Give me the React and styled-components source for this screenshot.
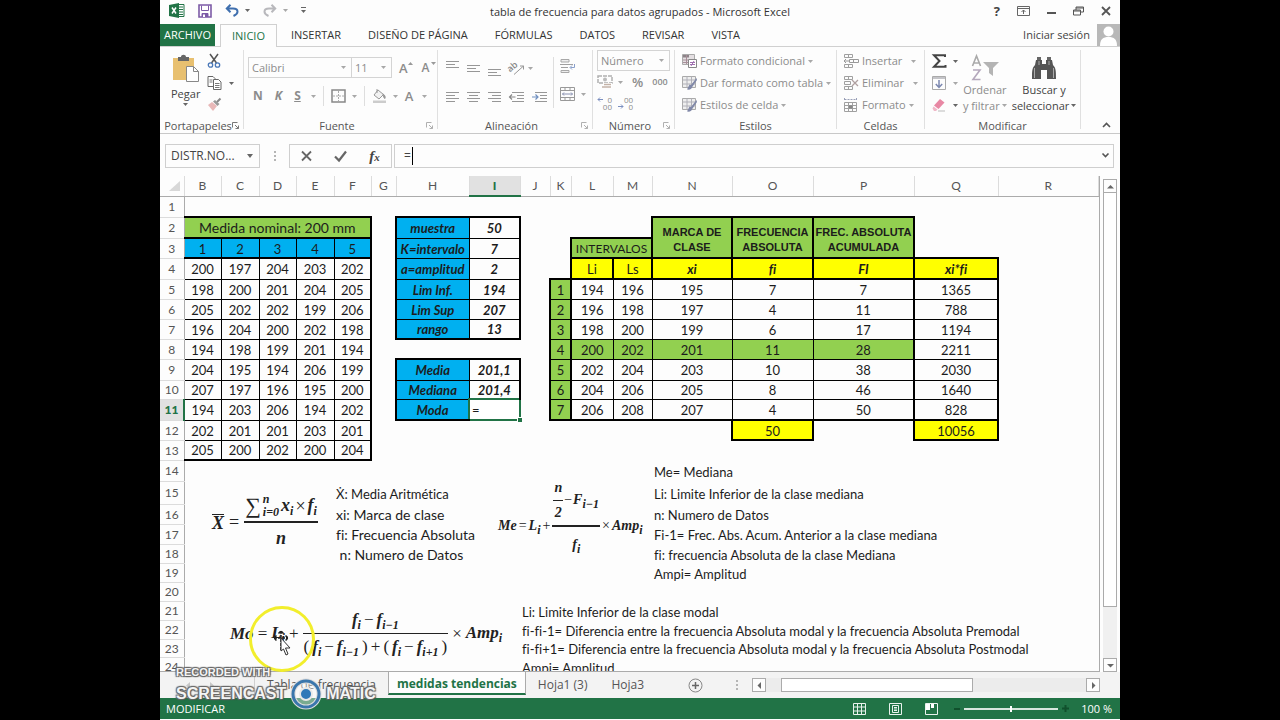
import React from 'react';
import styled, { createGlobalStyle, css } from 'styled-components';

const GREEN = '#217346';
const LIME = '#92d050';
const BLUE = '#00b0f0';
const YELLOW = '#ffff00';

const GlobalStyle = createGlobalStyle`
  *, *::before, *::after { box-sizing: border-box; }
  html, body { margin: 0; padding: 0; background: #000; }
  button, input, select { font: inherit; color: inherit; margin: 0; }
  svg { display: block; flex: none; overflow: visible; }
`;

const Screen = styled.div`
  min-height: 100vh;
  padding: 0 12.5%;
  background: #000;
`;

const Window = styled.div`
  position: relative;
  display: flex;
  flex-direction: column;
  height: 100vh;
  overflow: hidden;
  background: #fdfdfd;
  color: #444;
  font-family: "Open Sans", "Noto Sans", sans-serif;
  font-size: 11px;
  line-height: 16px;
`;

const Plain = styled.button`
  display: inline-flex;
  align-items: center;
  justify-content: center;
  gap: ${(p) => p.$gap ?? 4}px;
  padding: 0;
  border: 0;
  background: none;
  white-space: nowrap;
  color: ${(p) => (p.disabled ? '#8c8c8c' : '#444')};
`;

/* ---------- title bar ---------- */
const TitleBar = styled.header`
  display: flex;
  align-items: center;
  height: 24px;
  flex: none;
  padding: 0 9px 3px 9px;
`;
const QuickAccess = styled.div`
  display: flex;
  align-items: center;
  gap: 13px;
  flex: 1 1 0;
`;
const Title = styled.h1`
  margin: 0;
  padding-top: 2px;
  font-size: 11px;
  font-weight: 400;
  color: #333;
`;
const WindowButtons = styled.div`
  display: flex;
  align-items: center;
  justify-content: flex-end;
  gap: 17px;
  flex: 1 1 0;
`;

/* ---------- ribbon tabs ---------- */
const TabRow = styled.nav`
  display: flex;
  align-items: stretch;
  height: 23px;
  flex: none;
  border-bottom: 1px solid #d0d0d0;
`;
const FileTab = styled.button`
  width: 55px;
  padding: 0;
  border: 0;
  background: ${GREEN};
  color: #fff;
  font-size: 11px;
`;
const RibbonTab = styled.button`
  margin-right: 5px;
  padding: 0 11px;
  border: 0;
  background: none;
  font-size: 11px;
  color: #333;
  white-space: nowrap;
  ${(p) =>
    p.$active &&
    css`
      margin: 0 3px -1px 5px;
      border: 1px solid #d0d0d0;
      border-bottom: 0;
      background: #fdfdfd;
      color: ${GREEN};
    `}
`;
const Account = styled.div`
  display: flex;
  align-items: center;
  gap: 7px;
  margin-left: auto;
  font-size: 11px;
`;

/* ---------- ribbon ---------- */
const Ribbon = styled.div`
  display: flex;
  height: 87px;
  flex: none;
  padding-top: 3px;
  border-bottom: 1px solid #c8c8c8;
`;
const GroupBox = styled.section`
  display: flex;
  flex-direction: column;
  width: ${(p) => p.$w}px;
  flex: none;
  background: linear-gradient(#e0e0e0, #e0e0e0) right top / 1px calc(100% - 4px) no-repeat;
`;
const GroupBody = styled.div`
  display: flex;
  flex: 1;
  min-height: 0;
  padding: ${(p) => p.$pad || '0'};
  gap: ${(p) => p.$gap ?? 0}px;
`;
const GroupFoot = styled.div`
  display: flex;
  align-items: center;
  height: 15px;
  padding: 0 5px 0 4px;
  font-size: 11px;
  line-height: 14px;
  color: #555;
`;
const GroupLabel = styled.span`
  flex: 1;
  text-align: center;
  white-space: nowrap;
`;
const Column = styled.div`
  display: flex;
  flex-direction: column;
  align-items: ${(p) => p.$align || 'flex-start'};
  gap: ${(p) => p.$gap ?? 0}px;
  padding: ${(p) => p.$pad || '0'};
`;
const Row = styled.div`
  display: flex;
  align-items: center;
  height: ${(p) => p.$h}px;
  gap: ${(p) => p.$gap ?? 4}px;
  padding-left: ${(p) => p.$pl ?? 0}px;
`;
const BigButton = styled(Plain)`
  flex-direction: column;
  gap: ${(p) => p.$gap ?? 1}px;
  line-height: 15px;
`;
const InlineCaret = styled.span`
  display: inline-flex;
  align-items: center;
  gap: 2px;
`;
const Divider = styled.span`
  width: 1px;
  height: ${(p) => p.$h}px;
  background: #dedede;
`;
const SelectWrap = styled.label`
  display: flex;
  align-items: center;
  width: ${(p) => p.$w}px;
  height: 21px;
  padding-right: 5px;
  border: 1px solid #d4d4d4;
  background: #fdfdfd;
  & + & { margin-left: -1px; }
`;
const Select = styled.select`
  flex: 1;
  min-width: 0;
  height: 100%;
  padding: 0 0 0 3px;
  border: 0;
  background: none;
  appearance: none;
  color: #8c8c8c;
  opacity: 1;
`;
const Letter = styled.span`
  font-size: ${(p) => p.$size || 12}px;
  font-weight: ${(p) => (p.$bold ? 700 : 600)};
  font-style: ${(p) => (p.$italic ? 'italic' : 'normal')};
  text-decoration: ${(p) => (p.$under ? 'underline' : 'none')};
`;
const Collapse = styled(Plain)`
  align-self: flex-end;
  margin-left: auto;
  padding: 0 9px 5px;
`;

/* ---------- formula bar ---------- */
const FormulaBar = styled.div`
  display: flex;
  align-items: center;
  height: 42px;
  flex: none;
  padding: 1px 6px 0 5px;
`;
const FieldBox = styled.div`
  position: relative;
  display: flex;
  align-items: center;
  height: 24px;
  border: 1px solid #cfcfcf;
  background: #fdfdfd;
  padding-right: ${(p) => p.$pr ?? 0}px;
  width: ${(p) => (p.$w ? `${p.$w}px` : 'auto')};
  flex: ${(p) => (p.$grow ? 1 : 'none')};
  margin-left: ${(p) => (p.$grow ? 2 : 0)}px;
`;
const FieldInput = styled.input`
  flex: 1;
  min-width: 0;
  height: 100%;
  padding: 0 0 0 ${(p) => p.$pl ?? 5}px;
  border: 0;
  outline: 0;
  background: none;
  font-size: 12px;
  color: #444;
`;
const TextCaret = styled.span`
  position: absolute;
  left: 17px;
  top: 2px;
  width: 1px;
  height: 18px;
  background: #000;
`;
const Grip = styled.span`
  display: flex;
  flex-direction: column;
  align-items: center;
  gap: 2px;
  width: ${(p) => p.$w}px;
  &::before, &::after, & > i { content: ''; width: 2px; height: 2px; background: #b5b5b5; }
`;
const Fx = styled(Plain)`
  width: 33px;
  font-family: "Liberation Serif", serif;
  font-size: 15px;
  font-style: italic;
  font-weight: 700;
  gap: 0;
  small { font-size: 11px; padding-top: 3px; }
`;

/* ---------- sheet ---------- */
const Workspace = styled.main`
  display: flex;
  flex: 1;
  min-height: 0;
`;
const SheetPane = styled.div`
  position: relative;
  flex: 1;
  min-width: 0;
  overflow: hidden;
  border-right: 1px solid #ababab;
  border-bottom: 1px solid #ababab;
`;
const Grid = styled.table`
  width: 100%;
  table-layout: fixed;
  border-collapse: collapse;
  font-family: Lato, "Noto Sans", sans-serif;
  font-size: 13px;
  font-variant-ligatures: none;
  line-height: 16px;
  color: #1c1c1c;
`;
const SheetRow = styled.tr`
  height: ${(p) => p.$h}px;
`;
const ColHead = styled.th`
  padding: 0;
  border-right: 1px solid #dcdcdc;
  border-bottom: 1px solid #ababab;
  background: #fdfdfd;
  font-size: 12px;
  font-weight: 400;
  color: #555;
  ${(p) =>
    p.$active &&
    css`
      background: #e1e1e1;
      border-bottom: 2px solid ${GREEN};
      font-weight: 900;
      color: ${GREEN};
    `}
`;
const RowHead = styled.th`
  padding: 1px 0 0;
  border-right: 1px solid #ababab;
  border-bottom: 1px solid #dcdcdc;
  background: #fdfdfd;
  font-size: 12px;
  font-weight: 400;
  color: #555;
  ${(p) =>
    p.$active &&
    css`
      background: #e1e1e1;
      border-right: 2px solid ${GREEN};
      font-weight: 900;
      color: ${GREEN};
    `}
`;
const side = (b, ch) => {
  if (b.includes(ch.toUpperCase())) return '2px solid #000';
  if (b.includes(ch)) return '1px solid #000';
  return '0';
};
const Cell = styled.td`
  padding: ${(p) => p.$pad || '1px 0 0'};
  text-align: ${(p) => (p.$left ? 'left' : 'center')};
  white-space: ${(p) => (p.$wrap ? 'normal' : 'nowrap')};
  background: ${(p) => p.$bg || 'transparent'};
  font-weight: ${(p) => (p.$bold ? 700 : 400)};
  font-style: ${(p) => (p.$italic ? 'italic' : 'normal')};
  font-size: ${(p) => p.$size || 13}px;
  font-family: ${(p) => (p.$sans ? '"Liberation Sans", sans-serif' : 'inherit')};
  line-height: ${(p) => (p.$wrap ? 15 : 16)}px;
  border-top: ${(p) => side(p.$b || '', 't')};
  border-right: ${(p) => side(p.$b || '', 'r')};
  border-bottom: ${(p) => side(p.$b || '', 'b')};
  border-left: ${(p) => side(p.$b || '', 'l')};
`;
const ActiveCell = styled.td`
  position: relative;
  padding: 1px 0 0 2px;
  border: 2px solid ${GREEN};
  text-align: left;
  background: #fff;
  &::after {
    content: '';
    position: absolute;
    right: -3px;
    bottom: -3px;
    width: 5px;
    height: 5px;
    border: 1px solid #fff;
    border-right: 0;
    border-bottom: 0;
    background: ${GREEN};
  }
`;

/* ---------- floating equations ---------- */
const Equation = styled.div`
  position: absolute;
  left: ${(p) => p.$x}px;
  top: ${(p) => p.$y}px;
  display: flex;
  align-items: center;
  gap: ${(p) => p.$gap}px;
  font-family: "Liberation Serif", serif;
  font-size: ${(p) => p.$size}px;
  font-weight: 700;
  font-style: italic;
  line-height: 16px;
  color: #222;
  white-space: nowrap;
`;
const Fraction = styled.span`
  display: inline-flex;
  flex-direction: column;
  align-items: center;
  padding: 0 1px;
`;
const Part = styled.span`
  display: flex;
  align-items: ${(p) => (p.$top ? 'flex-start' : 'center')};
  justify-content: center;
  gap: ${(p) => p.$gap ?? 2}px;
  height: ${(p) => p.$h}px;
  padding-top: ${(p) => p.$top ?? 0}px;
`;
const Bar = styled.span`
  align-self: stretch;
  height: ${(p) => p.$t || 2}px;
  margin: 0 -1px;
  background: #222;
`;
const Sub = styled.sub`
  font-size: 12px;
  line-height: 8px;
  vertical-align: -4px;
`;
const Op = styled.span`
  font-weight: 400;
  font-style: normal;
`;
const Sigma = styled.span`
  font-size: 22px;
  font-weight: 400;
  font-style: normal;
`;
const Limits = styled.span`
  display: flex;
  flex-direction: column;
  font-size: 12px;
  line-height: 13px;
`;
const Mean = styled.span`
  border-top: 1px solid #222;
  line-height: 16px;
`;

/* ---------- scroll bars, sheet tabs, status ---------- */
const VScroll = styled.div`
  display: flex;
  flex-direction: column;
  align-items: center;
  width: 20px;
  padding: 3px 2px 0 2px;
`;
const ScrollButton = styled.button`
  display: flex;
  align-items: center;
  justify-content: center;
  width: 14px;
  height: 14px;
  flex: none;
  padding: 0;
  border: 1px solid #ababab;
  background: #fdfdfd;
`;
const VTrack = styled.div`
  flex: 1;
  width: 14px;
  background: #f0f0f0;
`;
const VThumb = styled.div`
  height: 89%;
  border: 1px solid #ababab;
  border-top: 0;
  background: #fff;
`;
const SheetTabs = styled.div`
  display: flex;
  height: 26px;
  flex: none;
  padding-right: 20px;
  background: #f3f3f3;
  font-size: 12px;
`;
const NavArrows = styled.div`
  display: flex;
  align-items: center;
  gap: 20px;
  width: 95px;
  padding: 0 0 0 26px;
  border-right: 1px solid #d0d0d0;
`;
const SheetTab = styled.button`
  height: 25px;
  padding: 0 12px;
  border: 0;
  background: none;
  font-size: 12px;
  color: #555;
  white-space: nowrap;
  ${(p) =>
    p.$active &&
    css`
      height: 23px;
      padding: 2px 8px 0;
      border-right: 1px solid #ababab;
      border-left: 1px solid #ababab;
      border-bottom: 2px solid ${GREEN};
      background: #fdfdfd;
      font-weight: 700;
      color: ${GREEN};
    `}
`;
const AddSheet = styled(Plain)`
  margin-left: 32px;
`;
const HScroll = styled.div`
  display: flex;
  align-items: center;
  flex: 0 0 364px;
  margin-left: auto;
`;
const HTrack = styled.div`
  flex: 1;
  height: 14px;
  padding-left: 15px;
  background: #ececec;
`;
const HThumb = styled.div`
  width: 63%;
  height: 14px;
  border: 1px solid #ababab;
  background: #fff;
`;
const StatusBar = styled.footer`
  display: flex;
  align-items: center;
  height: 21px;
  flex: none;
  margin-bottom: 1px;
  padding: 0 8px 0 6px;
  background: ${GREEN};
  color: #fff;
  font-size: 11px;
`;
const ViewIcons = styled.div`
  display: flex;
  align-items: center;
  gap: 23px;
  margin: 0 16px 0 auto;
`;
const Zoom = styled.label`
  display: flex;
  align-items: center;
  gap: 4px;
`;
const ZoomValue = styled.span`
  padding-left: 8px;
`;
const ZoomRange = styled.input`
  width: 94px;
  height: 12px;
  appearance: none;
  background: linear-gradient(#d7e6dd, #d7e6dd) center / 100% 2px no-repeat;
  &::-webkit-slider-thumb {
    appearance: none;
    width: 2px;
    height: 6px;
    background: #fff;
  }
`;

/* ---------- recorder overlays ---------- */
const Halo = styled.div`
  position: absolute;
  left: 89px;
  top: 606px;
  width: 66px;
  height: 66px;
  border: 3px solid #f2ee2c;
  border-radius: 50%;
`;
const Pointer = styled.div`
  position: absolute;
  left: 113px;
  top: 630px;
`;
const Watermark = styled.div`
  position: absolute;
  left: 16px;
  top: 664px;
  font-family: "Liberation Sans", sans-serif;
  font-weight: 700;
  color: #f4f4f4;
  text-shadow: -1px -1px 1px #666, 1px -1px 1px #666, -1px 1px 1px #666, 1px 1px 1px #555;
`;
const WatermarkTop = styled.div`
  font-size: 11px;
  line-height: 16px;
`;
const WatermarkMain = styled.div`
  display: flex;
  align-items: center;
  gap: 4px;
  height: 27px;
  font-size: 16px;
`;

/* ---------- icons ---------- */
const Svg = ({ w, h, children, ...rest }) => (
  <svg width={w} height={h} viewBox={`0 0 ${w} ${h}`} fill="none" aria-hidden="true" {...rest}>
    {children}
  </svg>
);
const Caret = ({ c = '#a8a8a8' }) => (
  <Svg w={5} h={3}>
    <path d="M0 0h5L2.500 3z" fill={c} />
  </Svg>
);
const Launcher = ({ c = '#b0b0b0' }) => (
  <Svg w={7} h={7}>
    <path d="M.5 5.500V.5h5M3 3l3.500 3.500M6.500 3.500v3h-3" stroke={c} />
  </Svg>
);
const ExcelLogo = () => (
  <Svg w={16} h={15}>
    <path d="M9 1.500h6v12H9" fill="#fff" stroke={GREEN} />
    <path d="M10 4h4M10 6.500h4M10 9h4M10 11.500h4" stroke={GREEN} strokeWidth="1.200" />
    <path d="M0 2l10-2v15L0 13z" fill={GREEN} />
    <path d="M3 4.500l4 6M7 4.500l-4 6" stroke="#fff" strokeWidth="1.500" />
  </Svg>
);
const SaveIcon = () => (
  <Svg w={14} h={14}>
    <path d="M1 1h12v12H1z" stroke="#7c5aa6" strokeWidth="1.600" fill="#fff" />
    <path d="M3.500 1.500v5h7v-5" stroke="#7c5aa6" />
    <path d="M4 13V9.500h6V13" stroke="#7c5aa6" fill="#7c5aa6" />
    <path d="M5 10.500h2V13H5z" fill="#fff" />
  </Svg>
);
const UndoIcon = ({ c }) => (
  <Svg w={14} h={13}>
    <path d="M1.500 4.500H8c3 0 4.500 1.500 4.500 3.200 0 1.800-1.300 3-4 4.300M5.500 .8L1.800 4.500 5.500 8.200" stroke={c} strokeWidth="2" />
  </Svg>
);
const RedoIcon = ({ c }) => (
  <Svg w={14} h={13}>
    <path d="M12.500 4.500H6C3 4.500 1.500 6 1.500 7.700c0 1.800 1.300 3 4 4.300M8.500 .8l3.700 3.700-3.700 3.700" stroke={c} strokeWidth="2" />
  </Svg>
);
const PasteIcon = () => (
  <Svg w={28} h={30}>
    <path d="M1 4h21v22H1z" fill="#e8c070" />
    <path d="M6 3h3c0-3 5-3 5 0h3v4H6z" fill="#666" />
    <path d="M14.500 12.500h7l5 5v10h-12z" fill="#fff" stroke="#888" />
    <path d="M21.500 12.500v5h5" stroke="#888" />
  </Svg>
);
const CutIcon = () => (
  <Svg w={14} h={14}>
    <path d="M3 0l6.500 9M11 0L4.500 9" stroke="#555" strokeWidth="1.500" />
    <circle cx="3.500" cy="11" r="2.200" stroke="#4a78b8" strokeWidth="1.300" />
    <circle cx="10.500" cy="11" r="2.200" stroke="#4a78b8" strokeWidth="1.300" />
  </Svg>
);
const CopyIcon = () => (
  <Svg w={15} h={14}>
    <path d="M1 .5h5l2 2v8H1z" fill="#fff" stroke="#666" />
    <path d="M6.500 3.500h5l2.500 2.500v7.500H6.500z" fill="#fff" stroke="#666" />
    <path d="M8 7.500h4.500M8 9.500h4.500M8 11.500h4.500M2.500 4h3M2.500 6h3" stroke="#777" />
  </Svg>
);
const BrushIcon = () => (
  <Svg w={15} h={13}>
    <path d="M1 7l4-3 5 4-4 5z" fill="#e8b8b8" />
    <path d="M6 3.500l4.500 4.500 2-2L8 2z" fill="#999" />
    <path d="M10 4l3.500-3.500" stroke="#888" strokeWidth="2" />
  </Svg>
);
const BordersIcon = () => (
  <Svg w={15} h={14}>
    <path d="M1 1h13v12H1z" stroke="#888" strokeWidth="1.500" />
    <path d="M7.500 2v10M2 7h11" stroke="#aaa" strokeDasharray="2 1" />
  </Svg>
);
const FillIcon = () => (
  <Svg w={15} h={14}>
    <path d="M6 1l5.500 4.500L7 10 2 6z" stroke="#999" fill="#f2f2f2" />
    <path d="M5 4V0M11 5c2 1 2.500 3 2 4.500-1 0-1.500-2-2-4.500z" stroke="#999" fill="#999" />
    <path d="M1 11.500h13V14H1z" fill="#ccc" />
  </Svg>
);
const Lines = ({ lens, align = 'left', shift = 0 }) => (
  <Svg w={13} h={11}>
    {lens.map((l, i) => {
      const x = { left: 0, right: 13 - l, center: (13 - l) / 2 }[align];
      return <path key={i} d={`M${x} ${i * 3 + 0.5 + shift}h${l}`} stroke="#979797" />;
    })}
  </Svg>
);
const IndentIcon = ({ flip }) => (
  <Svg w={15} h={11}>
    <path d="M3 .5h12M8 3.500h7M8 6.500h7M3 9.500h12" stroke="#979797" />
    <path d={flip ? 'M0 5h6M3.500 2.500L6 5 3.500 7.500' : 'M6.500 5h-6M3 2.500L.5 5 3 7.500'} stroke={flip ? '#6f8fc0' : '#888'} strokeWidth="1.200" />
  </Svg>
);
const OrientIcon = () => (
  <Svg w={15} h={14}>
    <text x="0" y="9" fontSize="9" fill="#888" transform="rotate(-40 4 9)" fontWeight="600">ab</text>
    <path d="M5 13.500L14.500 5M14.500 8.500V5H11" stroke="#979797" />
  </Svg>
);
const WrapIcon = () => (
  <Svg w={16} h={14}>
    <path d="M1 .5h8v2.500H1zM1 11.500h8v2H1z" stroke="#a8a8a8" fill="#eee" />
    <path d="M0 5.500h13M1 8.500h7" stroke="#a0a0a0" />
    <path d="M14.500 5v3.500h-4M12 6.500l-2 2 2 2" stroke="#8aa0cc" />
  </Svg>
);
const MergeIcon = () => (
  <Svg w={15} h={14}>
    <path d="M.5.5h14v13H.5zM.5 3.500h14M.5 10.500h14M5 .5v3M10 .5v3M5 10.500v3M10 10.500v3" stroke="#999" />
    <path d="M2.500 7h10M4 5.500L2.500 7 4 8.500M11 5.500L12.500 7 11 8.500" stroke="#8890b0" />
  </Svg>
);
const MoneyIcon = () => (
  <Svg w={16} h={14}>
    <path d="M1 1h14v7H1z" stroke="#b0b0b0" strokeDasharray="4 1" strokeWidth="1.500" />
    <circle cx="8" cy="4.500" r="2" fill="#bbb" />
    <path d="M7 8h8v5H5z" fill="#fff" />
    <path d="M7 9.500h7M5 12h9" stroke="#c4b3a8" strokeWidth="1.500" />
  </Svg>
);
const Digits = styled.span`
  display: grid;
  grid-template-columns: 6px auto;
  justify-items: end;
  align-items: center;
  width: 15px;
  font-size: 8px;
  line-height: 7px;
  & > :last-child { grid-column: ${(p) => (p.$less ? 2 : '1 / 3')}; }
`;
const CondIcon = () => (
  <Svg w={15} h={14}>
    <path d="M.5.5h12v10H.5z" fill="#e4dfe2" stroke="#aaa" />
    <path d="M1 1h6v2.500H1z" fill="#8d8388" />
    <path d="M1 6h5M1 8.500h5M4.500 1v9" stroke="#a78f98" />
    <path d="M6.500 5.500h8v8h-8z" fill="#fff" stroke="#888" />
    <path d="M8 8.500h5M8 10.500h5M12 7l-3 5" stroke="#a070b0" />
  </Svg>
);
const TableStyleIcon = () => (
  <Svg w={15} h={14}>
    <path d="M.5.5h13v11H.5z" fill="#eee" stroke="#aaa" />
    <path d="M.5 4h13M.5 8h13M5 .5v11M9.500.5v11" stroke="#b0b0b8" />
    <path d="M14.500 2L9 9l-1.500-.5L5 13.500c3 .5 5-.5 5.500-3L15 4z" fill="#8088a8" />
  </Svg>
);
const CellsIcon = ({ kind }) => (
  <Svg w={16} h={14}>
    {kind === 'format' ? (
      <>
        <path d="M1.500 1.500h12M1.500 0v3M13.500 0v3" stroke="#9aa0b8" strokeDasharray="2 1" />
        <path d="M1.500 4.500h12v9h-12zM1.500 7.500h12M1.500 10.500h12M5.500 4.500v9M9.500 4.500v9" stroke="#a0a0a0" />
        <path d="M6 7.500h3.500v3H6z" fill="#888" />
      </>
    ) : (
      <>
        <path d="M1.500.5h8v3h-8zM5.500.5v3M1.500 10.500h8v3h-8zM5.500 10.500v3" stroke="#a0a0a0" />
        {kind === 'insert' ? (
          <path d="M6.500 5.500h9v3h-9zM10.500 5.500v3M6 7H1M3 5L1 7l2 2" stroke="#999" />
        ) : (
          <>
            <path d="M1.500 5.500h6v3h-6z" stroke="#a0a0a0" />
            <path d="M9 4l6 6M15 4l-6 6" stroke="#b0a0a0" strokeWidth="1.300" />
          </>
        )}
      </>
    )}
  </Svg>
);
const SumIcon = () => (
  <Svg w={15} h={14}>
    <path d="M13 3V1.200H2L7.500 7 2 12.800h11.500V11" stroke="#444" strokeWidth="2" />
  </Svg>
);
const FillDownIcon = () => (
  <Svg w={14} h={14}>
    <path d="M.5.5h13v13H.5z" stroke="#aaa" />
    <path d="M1 1h12v2H1z" fill="#c4c4c8" />
    <path d="M7 4v7.500M3.800 8L7 11.500 10.200 8" stroke="#7c88b0" strokeWidth="1.500" />
  </Svg>
);
const EraserIcon = () => (
  <Svg w={14} h={13}>
    <path d="M8 0l4.500 3.500-6 6.500L2 6.500z" fill="#e888a4" />
    <path d="M1.500 7.500l4 3-1.500 1.500H2L.5 9.500z" fill="#f0b8c8" />
    <path d="M6 12h7" stroke="#bbb" />
  </Svg>
);
const SortIcon = () => (
  <Svg w={28} h={26}>
    <path d="M1.500 11L5.500 1l4 10M3 8h5" stroke="#aaa" strokeWidth="1.600" />
    <path d="M2 15h7L2 24.500h7.500" stroke="#b4a8bc" strokeWidth="1.600" />
    <path d="M12 7h16l-6 6v8l-4-3v-5z" fill="#b4b4b4" />
  </Svg>
);
const BinocularsIcon = () => (
  <Svg w={26} h={24}>
    <path d="M5 4h6v4h4V4h6l1 5c3 3 3 6 3 14h-9v-9h-6v9H1C1 15 1 12 4 9z" fill="#555" />
    <path d="M6 1h4v3H6zM16 1h4v3h-4z" fill="#666" />
    <path d="M3.500 12v10M22.500 12v10M8 5v4M18 5v4" stroke="#aaa" />
  </Svg>
);
const AvatarIcon = () => (
  <Svg w={23} h={22}>
    <path d="M0 0h23v22H0z" fill="#b8b8b8" />
    <circle cx="11.500" cy="7.500" r="5" fill="#fff" />
    <path d="M3 22c0-7 3-9 8.500-9s8.500 2 8.500 9z" fill="#fff" />
  </Svg>
);
const ArrowTip = ({ dir }) => (
  <Svg w={7} h={7}>
    <path d={{ up: 'M0 5.500h7L3.500 2z', down: 'M0 2h7L3.500 5.500z', left: 'M5 0v7L1.500 3.500z', right: 'M2 0v7l3.500-3.500z' }[dir]} fill="#666" />
  </Svg>
);

function Group({ w, label, launcher, launcherColor, children, pad, gap }) {
  return (
    <GroupBox $w={w} aria-label={label}>
      <GroupBody $pad={pad} $gap={gap}>{children}</GroupBody>
      <GroupFoot>
        <GroupLabel>{label}</GroupLabel>
        {launcher && (
          <Plain aria-label={`Abrir ${label}`}>
            <Launcher c={launcherColor} />
          </Plain>
        )}
      </GroupFoot>
    </GroupBox>
  );
}

/* ---------- sheet data ---------- */
const COLUMNS = [
  ['B', 37], ['C', 38], ['D', 37], ['E', 38], ['F', 37], ['G', 25], ['H', 73], ['I', 51], ['J', 30],
  ['K', 21], ['L', 42], ['M', 39], ['N', 80], ['O', 81], ['P', 101], ['Q', 84], ['R', 0],
];
const LETTERS = COLUMNS.map(([l]) => l);
const HEIGHTS = [21, 21, 20, 21, 20, 20, 20, 20, 21, 19, 21, 20, 20, 21, 23, 20, 20, 19, 19, 19, 19, 19, 18, 19];

const SAMPLES = [
  [200, 197, 204, 203, 202], [198, 200, 201, 204, 205], [205, 202, 202, 199, 206], [196, 204, 200, 202, 198],
  [194, 198, 199, 201, 194], [204, 195, 194, 206, 199], [207, 197, 196, 195, 200], [194, 203, 206, 194, 202],
  [202, 201, 201, 203, 201], [205, 200, 202, 200, 204],
];
const CLASSES = [
  [1, 194, 196, 195, 7, 7, 1365], [2, 196, 198, 197, 4, 11, 788], [3, 198, 200, 199, 6, 17, 1194],
  [4, 200, 202, 201, 11, 28, 2211], [5, 202, 204, 203, 10, 38, 2030], [6, 204, 206, 205, 8, 46, 1640],
  [7, 206, 208, 207, 4, 50, 828],
];

const cells = {};
const put = (ref, v, opts = {}) => {
  cells[ref] = { v, ...opts };
};

put('B2', 'Medida nominal: 200 mm', { span: 5, bg: LIME, size: 14, b: 'TRB' });
['B', 'C', 'D', 'E', 'F'].forEach((c, i) => {
  put(`${c}3`, i + 1, { bg: BLUE, b: `TB${i === 4 ? 'R' : 'r'}` });
  SAMPLES.forEach((r, j) => {
    put(`${c}${j + 4}`, r[i], { b: `${j === 9 ? 'B' : 'b'}${i === 4 ? 'R' : 'r'}` });
  });
});
[['muestra', '50'], ['K=intervalo', '7'], ['a=amplitud', '2'], ['Lim Inf.', '194'], ['Lim Sup', '207'], ['rango', '13']].forEach(([k, v], i) => {
  const edge = `${i === 0 ? 'T' : 't'}${i === 5 ? 'B' : 'b'}`;
  put(`H${i + 2}`, k, { bg: BLUE, bold: true, italic: true, b: `${edge}Lr` });
  put(`I${i + 2}`, v, { bold: true, italic: true, b: `${edge}lR` });
});
[['Media', '201,1'], ['Mediana', '201,4'], ['Moda', '=']].forEach(([k, v], i) => {
  const edge = `${i === 0 ? 'T' : 't'}${i === 2 ? 'B' : 'b'}`;
  put(`H${i + 9}`, k, { bg: BLUE, bold: true, italic: true, b: `${edge}Lr` });
  put(`I${i + 9}`, v, { bold: true, italic: true, b: `${edge}lR`, active: i === 2 });
});
put('L3', 'INTERVALOS', { span: 2, bg: LIME, size: 12, b: 'TRBL' });
[['N', 'MARCA DE CLASE'], ['O', 'FRECUENCIA ABSOLUTA'], ['P', 'FREC. ABSOLUTA ACUMULADA']].forEach(([c, v]) => {
  put(`${c}2`, v, { rows: 2, bg: LIME, sans: true, bold: true, size: 11, wrap: true, pad: '5px 0 0', b: 'TRBL' });
});
put('L4', 'Li', { bg: YELLOW, b: 'TRBL' });
put('M4', 'Ls', { bg: YELLOW, b: 'TRBL' });
[['N', 'xi'], ['O', 'fi'], ['P', 'FI'], ['Q', 'xi*fi']].forEach(([c, v]) => {
  put(`${c}4`, v, { bg: YELLOW, bold: true, italic: true, b: 'TBRL' });
});
CLASSES.forEach((r, i) => {
  const n = i + 5;
  const hot = i === 3 ? LIME : undefined;
  const bottom = i === 6 ? 'B' : 'b';
  put(`K${n}`, r[0], { bg: LIME, b: `${i === 0 ? 'T' : 't'}${bottom}LR` });
  put(`L${n}`, r[1], { bg: hot, b: `${bottom}Lr` });
  put(`M${n}`, r[2], { bg: hot, b: `${bottom}r` });
  put(`N${n}`, r[3], { bg: hot, b: `${bottom}r` });
  put(`O${n}`, r[4], { bg: hot, b: `${bottom}r` });
  put(`P${n}`, r[5], { bg: hot, b: `${bottom}R` });
  put(`Q${n}`, r[6], { b: `${bottom}LR` });
});
put('O12', 50, { bg: YELLOW, b: 'TRBL' });
put('Q12', 10056, { bg: YELLOW, b: 'TRBL' });
[
  ['F15', 'Ẋ: Media Aritmética'],
  ['F16', 'xi: Marca de clase', 14], ['F17', 'fi: Frecuencia Absoluta', 14], ['F18', '\u00a0n: Numero de Datos', 14],
  ['N14', 'Me= Mediana'], ['N15', 'Li: Limite Inferior de la clase mediana'], ['N16', 'n: Numero de Datos'],
  ['N17', 'Fi-1= Frec. Abs. Acum. Anterior a la clase mediana'], ['N18', 'fi: frecuencia Absoluta de la clase Mediana'], ['N19', 'Ampi= Amplitud'],
  ['J21', 'Li: Limite Inferior de la clase modal'],
  ['J22', 'fi-fi-1= Diferencia entre la frecuencia Absoluta modal y la frecuencia Absoluta Premodal'],
  ['J23', 'fi-fi+1= Diferencia entre la frecuencia Absoluta modal y la frecuencia Absoluta Postmodal'],
  ['J24', 'Ampi= Amplitud'],
].forEach(([ref, v, size]) => put(ref, v, { left: true, size, pad: '2px 0 0 2px' }));

const covered = new Set(['C2', 'D2', 'E2', 'F2', 'M3', 'N3', 'O3', 'P3']);

function Sheet() {
  return (
    <Grid>
      <colgroup>
        <col width="24" />
        {COLUMNS.map(([l, w]) => (w ? <col key={l} width={w} /> : <col key={l} />))}
      </colgroup>
      <thead>
        <SheetRow $h={20}>
          <ColHead aria-label="Seleccionar todo">
            <Svg w={24} h={14}>
              <path d="M20 2v10H9z" fill="#d8d8d8" />
            </Svg>
          </ColHead>
          {LETTERS.map((l) => (
            <ColHead key={l} scope="col" $active={l === 'I'}>{l}</ColHead>
          ))}
        </SheetRow>
      </thead>
      <tbody>
        {HEIGHTS.map((h, i) => {
          const n = i + 1;
          return (
            <SheetRow key={n} $h={h}>
              <RowHead scope="row" $active={n === 11}>{n}</RowHead>
              {LETTERS.map((l) => {
                const ref = l + n;
                if (covered.has(ref)) return null;
                const c = cells[ref];
                if (!c) return <Cell key={ref} />;
                if (c.active) return <ActiveCell key={ref}>{c.v}</ActiveCell>;
                return (
                  <Cell
                    key={ref}
                    colSpan={c.span}
                    rowSpan={c.rows}
                    $bg={c.bg}
                    $b={c.b}
                    $bold={c.bold}
                    $italic={c.italic}
                    $size={c.size}
                    $sans={c.sans}
                    $wrap={c.wrap}
                    $left={c.left}
                    $pad={c.pad}
                  >
                    {c.v}
                  </Cell>
                );
              })}
            </SheetRow>
          );
        })}
      </tbody>
    </Grid>
  );
}

function Equations() {
  return (
    <>
      <Equation $x={52} $y={315} $size={18} $gap={5}>
        <Mean>X</Mean>
        <Op>=</Op>
        <Fraction>
          <Part $h={30} $gap={2}>
            <Sigma>∑</Sigma>
            <Limits><span>n</span><span>i=0</span></Limits>
            <span>x<Sub>i</Sub></span>
            <Op>×</Op>
            <span>f<Sub>i</Sub></span>
          </Part>
          <Bar />
          <Part $h={30}>n</Part>
        </Fraction>
      </Equation>
      <Equation $x={338} $y={299} $size={14} $gap={2}>
        <span>Me</span>
        <Op>=</Op>
        <span>L<Sub>i</Sub></span>
        <Op>+</Op>
        <Fraction>
          <Part $h={50} $gap={1}>
            <Fraction>
              <Part $h={24}>n</Part>
              <Bar $t={1} />
              <Part $h={24}>2</Part>
            </Fraction>
            <Op>−</Op>
            <span>F<Sub>i−1</Sub></span>
          </Part>
          <Bar />
          <Part $h={50} $top={10}><span>f<Sub>i</Sub></span></Part>
        </Fraction>
        <Op>×</Op>
        <span>Amp<Sub>i</Sub></span>
      </Equation>
      <Equation $x={70} $y={431} $size={17} $gap={4}>
        <span>Mo</span>
        <Op>=</Op>
        <span>L<Sub>i</Sub></span>
        <Op>+</Op>
        <Fraction>
          <Part $h={26} $gap={3}>
            <span>f<Sub>i</Sub></span><Op>−</Op><span>f<Sub>i−1</Sub></span>
          </Part>
          <Bar $t={1} />
          <Part $h={26} $gap={3}>
            <Op>(</Op><span>f<Sub>i</Sub></span><Op>−</Op><span>f<Sub>i−1</Sub></span><Op>)</Op>
            <Op>+</Op>
            <Op>(</Op><span>f<Sub>i</Sub></span><Op>−</Op><span>f<Sub>i+1</Sub></span><Op>)</Op>
          </Part>
        </Fraction>
        <Op>×</Op>
        <span>Amp<Sub>i</Sub></span>
      </Equation>
    </>
  );
}

function RibbonPanel() {
  return (
    <Ribbon>
      <Group w={84} label="Portapapeles" launcher launcherColor="#777" pad="4px 0 0 11px" gap={7}>
        <BigColumn>
          <BigButton $gap={2}>
            <PasteIcon />
            Pegar
            <Caret c="#666" />
          </BigButton>
        </BigColumn>
        <Column $gap={8}>
          <Plain aria-label="Cortar"><CutIcon /></Plain>
          <Plain aria-label="Copiar" $gap={7}><CopyIcon /><Caret c="#666" /></Plain>
          <Plain aria-label="Copiar formato" disabled><BrushIcon /></Plain>
        </Column>
      </Group>

      <Group w={194} label="Fuente" launcher pad="7px 0 0 4px">
        <Column $gap={7}>
          <Row $h={21} $gap={0}>
            <SelectWrap $w={104}>
              <Select disabled aria-label="Fuente"><option>Calibri</option></Select>
              <Caret />
            </SelectWrap>
            <SelectWrap $w={41}>
              <Select disabled aria-label="Tamaño"><option>11</option></Select>
              <Caret />
            </SelectWrap>
            <Row $h={21} $gap={9} $pl={7}>
              <Plain disabled aria-label="Aumentar tamaño" $gap={0}>
                <Letter $size={13}>A</Letter>
                <Svg w={5} h={12}><path d="M0 3h5L2.500 0z" fill="#999" /></Svg>
              </Plain>
              <Plain disabled aria-label="Disminuir tamaño" $gap={1}>
                <Letter $size={12}>A</Letter>
                <Svg w={5} h={12}><path d="M0 0h5L2.500 3z" fill="#999" /></Svg>
              </Plain>
            </Row>
          </Row>
          <Row $h={22} $gap={7} $pl={5}>
            <Row $h={22} $gap={12}>
              <Plain disabled><Letter $bold>N</Letter></Plain>
              <Plain disabled><Letter $bold $italic>K</Letter></Plain>
              <Plain disabled $gap={10}><Letter $bold $under>S</Letter><Caret /></Plain>
            </Row>
            <Divider $h={20} />
            <Plain disabled aria-label="Bordes" $gap={6}><BordersIcon /><Caret /></Plain>
            <Divider $h={20} />
            <Plain disabled aria-label="Color de relleno" $gap={6}><FillIcon /><Caret /></Plain>
            <Plain disabled aria-label="Color de fuente" $gap={9}><Letter $size={13}>A</Letter><Caret /></Plain>
          </Row>
        </Column>
      </Group>

      <Group w={155} label="Alineación" launcher pad="7px 0 0 8px" gap={6}>
        <Column $gap={7}>
          <Row $h={22} $gap={8}>
            <Plain disabled aria-label="Arriba"><Lines lens={[13, 9, 13]} shift={-2} /></Plain>
            <Plain disabled aria-label="Medio"><Lines lens={[13, 9, 13]} shift={2} /></Plain>
            <Plain disabled aria-label="Abajo"><Lines lens={[13, 9, 13]} shift={6} /></Plain>
            <Plain disabled aria-label="Orientación"><OrientIcon /><Caret /></Plain>
          </Row>
          <Row $h={22} $gap={8}>
            <Plain disabled aria-label="Izquierda"><Lines lens={[13, 9, 13, 9]} /></Plain>
            <Plain disabled aria-label="Centro"><Lines align="center" lens={[13, 9, 13, 9]} /></Plain>
            <Plain disabled aria-label="Derecha"><Lines align="right" lens={[13, 9, 13, 9]} /></Plain>
            <Plain disabled aria-label="Disminuir sangría"><IndentIcon /></Plain>
            <Plain disabled aria-label="Aumentar sangría"><IndentIcon flip /></Plain>
          </Row>
        </Column>
        <Divider $h={51} />
        <Column $gap={14} $pad="2px 0 0">
          <Plain disabled aria-label="Ajustar texto"><WrapIcon /></Plain>
          <Plain disabled aria-label="Combinar" $gap={6}><MergeIcon /><Caret /></Plain>
        </Column>
      </Group>

      <Group w={82} label="Número" launcher pad="0 0 0 4px">
        <Column>
          <SelectWrap $w={73}>
            <Select disabled aria-label="Formato de número"><option>Número</option></Select>
            <Caret />
          </SelectWrap>
          <Row $h={22} $gap={9}>
            <Plain disabled aria-label="Moneda" $gap={5}><MoneyIcon /><Caret /></Plain>
            <Plain disabled><Letter $size={13}>%</Letter></Plain>
            <Plain disabled><Letter $size={9}>000</Letter></Plain>
          </Row>
          <Row $h={20} $gap={6}>
            <Plain disabled aria-label="Aumentar decimales">
              <Digits>
                <Svg w={6} h={5}><path d="M6 2.500H1M3 .5l-2 2 2 2" stroke="#7b8fc0" /></Svg>
                <span>0</span>
                <span>00</span>
              </Digits>
            </Plain>
            <Plain disabled aria-label="Disminuir decimales">
              <Digits $less>
                <span />
                <span>00</span>
                <Svg w={6} h={5}><path d="M0 2.500h5M3 .5l2 2-2 2" stroke="#7b8fc0" /></Svg>
                <span>0</span>
              </Digits>
            </Plain>
          </Row>
        </Column>
      </Group>

      <Group w={162} label="Estilos" pad="0 0 0 7px">
        <Column>
          <Row $h={22}><Plain disabled $gap={3}><CondIcon />Formato condicional<Caret /></Plain></Row>
          <Row $h={22}><Plain disabled $gap={3}><TableStyleIcon />Dar formato como tabla<Caret /></Plain></Row>
          <Row $h={22}><Plain disabled $gap={3}><TableStyleIcon />Estilos de celda<Caret /></Plain></Row>
        </Column>
      </Group>

      <Group w={88} label="Celdas" pad="0 0 0 6px">
        <Column>
          <Row $h={22}><Plain disabled $gap={3}><CellsIcon kind="insert" />Insertar&nbsp;&nbsp;<Caret /></Plain></Row>
          <Row $h={22}><Plain disabled $gap={3}><CellsIcon kind="delete" />Eliminar&nbsp;&nbsp;<Caret /></Plain></Row>
          <Row $h={22}><Plain disabled $gap={3}><CellsIcon kind="format" />Formato<Caret /></Plain></Row>
        </Column>
      </Group>

      <Group w={156} label="Modificar" pad="0 0 0 7px" gap={5}>
        <Column>
          <Row $h={22}><Plain aria-label="Autosuma" $gap={6}><SumIcon /><Caret c="#666" /></Plain></Row>
          <Row $h={22}><Plain disabled aria-label="Rellenar" $gap={7}><FillDownIcon /><Caret /></Plain></Row>
          <Row $h={22}><Plain aria-label="Borrar" $gap={7}><EraserIcon /><Caret c="#666" /></Plain></Row>
        </Column>
        <Column $pad="5px 0 0">
          <BigButton disabled $gap={1}>
            <SortIcon />
            <span>Ordenar</span>
            <InlineCaret>y filtrar<Caret /></InlineCaret>
          </BigButton>
        </Column>
        <Column $pad="6px 0 0">
          <BigButton $gap={1}>
            <BinocularsIcon />
            <BuscarLabel>Buscar y</BuscarLabel>
            <InlineCaret>seleccionar<Caret c="#666" /></InlineCaret>
          </BigButton>
        </Column>
      </Group>
      <Collapse aria-label="Contraer la cinta">
        <Svg w={9} h={6}><path d="M1 5l3.500-3.500L8 5" stroke="#555" strokeWidth="1.600" /></Svg>
      </Collapse>
    </Ribbon>
  );
}
const BigColumn = styled(Column)`
  align-items: center;
`;
const BuscarLabel = styled.span`
  padding-top: 1px;
`;

export default function App() {
  return (
    <Screen>
      <GlobalStyle />
      <Window>
        <TitleBar>
          <QuickAccess>
            <ExcelLogo />
            <Plain aria-label="Guardar"><SaveIcon /></Plain>
            <Plain aria-label="Deshacer" $gap={6}><UndoIcon c="#3f6fae" /><Caret c="#666" /></Plain>
            <Plain aria-label="Rehacer" $gap={6}><RedoIcon c="#b8b8bc" /><Caret /></Plain>
            <Plain aria-label="Personalizar">
              <Svg w={5} h={7}><path d="M0 .5h5" stroke="#666" /><path d="M0 3h5L2.500 6z" fill="#666" /></Svg>
            </Plain>
          </QuickAccess>
          <Title>tabla de frecuencia para datos agrupados - Microsoft Excel</Title>
          <WindowButtons>
            <Plain aria-label="Ayuda"><Letter $size={13} $bold>?</Letter></Plain>
            <Plain aria-label="Opciones de cinta">
              <Svg w={13} h={10}>
                <path d="M.5.5h12v9H.5zM.5 2.500h12" stroke="#666" />
                <path d="M6.500 8V4M4.500 6l2-2 2 2" stroke="#666" />
              </Svg>
            </Plain>
            <Plain aria-label="Minimizar"><Svg w={9} h={10}><path d="M0 7h9" stroke="#555" strokeWidth="2" /></Svg></Plain>
            <Plain aria-label="Restaurar">
              <Svg w={11} h={10}><path d="M.5 4h7v5h-7zM3 4V1h7.500v5H8M.5 5h7M3 2h7.500" stroke="#555" /></Svg>
            </Plain>
            <Plain aria-label="Cerrar"><Svg w={10} h={10}><path d="M1 1l8 8M9 1L1 9" stroke="#555" strokeWidth="1.800" /></Svg></Plain>
          </WindowButtons>
        </TitleBar>

        <TabRow>
          <FileTab>ARCHIVO</FileTab>
          <RibbonTab $active>INICIO</RibbonTab>
          {['INSERTAR', 'DISEÑO DE PÁGINA', 'FÓRMULAS', 'DATOS', 'REVISAR', 'VISTA'].map((t) => (
            <RibbonTab key={t}>{t}</RibbonTab>
          ))}
          <Account><span>Iniciar sesión</span><AvatarIcon /></Account>
        </TabRow>

        <RibbonPanel />

        <FormulaBar>
          <FieldBox $w={95} $pr={6}>
            <FieldInput aria-label="Cuadro de nombres" defaultValue="DISTR.NO..." />
            <Svg w={6} h={4}><path d="M0 0h6L3 4z" fill="#666" /></Svg>
          </FieldBox>
          <Grip $w={29}><i /></Grip>
          <FieldBox $w={103}>
            <Plain aria-label="Cancelar">
              <Svg w={34} h={12}><path d="M12 1.500l9 9M21 1.500l-9 9" stroke="#666" strokeWidth="1.800" /></Svg>
            </Plain>
            <Plain aria-label="Introducir">
              <Svg w={34} h={12}><path d="M11 6.500l4 4 7-9" stroke="#666" strokeWidth="2.200" /></Svg>
            </Plain>
            <Fx aria-label="Insertar función">f<small>x</small></Fx>
          </FieldBox>
          <FieldBox $grow $pr={4}>
            <FieldInput aria-label="Barra de fórmulas" defaultValue="=" $pl={9} />
            <TextCaret />
            <Svg w={7} h={5}><path d="M.5 .5l3 3 3-3" stroke="#555" strokeWidth="1.600" /></Svg>
          </FieldBox>
        </FormulaBar>

        <Workspace>
          <SheetPane>
            <Sheet />
            <Equations />
          </SheetPane>
          <VScroll>
            <ScrollButton aria-label="Subir"><ArrowTip dir="up" /></ScrollButton>
            <VTrack><VThumb /></VTrack>
            <ScrollButton aria-label="Bajar"><ArrowTip dir="down" /></ScrollButton>
          </VScroll>
        </Workspace>

        <SheetTabs>
          <NavArrows>
            <Svg w={4} h={7}><path d="M4 0v7L0 3.500z" fill="#c8c8c8" /></Svg>
            <Svg w={4} h={7}><path d="M0 0v7l4-3.500z" fill="#c8c8c8" /></Svg>
          </NavArrows>
          <SheetTab>Tabla de frecuencia</SheetTab>
          <SheetTab $active>medidas tendencias</SheetTab>
          <SheetTab>Hoja1 (3)</SheetTab>
          <SheetTab>Hoja3</SheetTab>
          <AddSheet aria-label="Hoja nueva">
            <Svg w={15} h={15}>
              <circle cx="7.500" cy="7.500" r="6.500" stroke="#888" />
              <path d="M7.500 4v7M4 7.500h7" stroke="#666" strokeWidth="1.500" />
            </Svg>
          </AddSheet>
          <HScroll>
            <Grip $w={2}><i /></Grip>
            <HSpacer />
            <ScrollButton aria-label="Izquierda"><ArrowTip dir="left" /></ScrollButton>
            <HTrack><HThumb /></HTrack>
            <ScrollButton aria-label="Derecha"><ArrowTip dir="right" /></ScrollButton>
          </HScroll>
        </SheetTabs>

        <StatusBar>
          <span>MODIFICAR</span>
          <ViewIcons>
            <Svg w={13} h={12}><path d="M.5.5h12v11H.5zM.5 4h12M.5 8h12M4.500.5v11M8.500.5v11" stroke="#e8f2ec" /></Svg>
            <Svg w={13} h={12}><path d="M.5.5h12v11H.5zM3.500 2.500h6v7h-6zM5 4.500h3M5 6h3M5 7.500h3" stroke="#e8f2ec" /></Svg>
            <Svg w={13} h={12}><path d="M.5.5h12v11H.5z" stroke="#e8f2ec" /><path d="M1 1h4v6H1zM6 1h3v4H6z" fill="#fff" /></Svg>
          </ViewIcons>
          <Zoom>
            <Svg w={6} h={6}><path d="M0 3h6" stroke="#10502c" strokeWidth="2" /></Svg>
            <ZoomRange type="range" aria-label="Zoom" defaultValue={50} />
            <Svg w={7} h={7}><path d="M0 3.500h7M3.500 0v7" stroke="#10502c" strokeWidth="2" /></Svg>
            <ZoomValue>100 %</ZoomValue>
          </Zoom>
        </StatusBar>

        <Halo />
        <Pointer>
          <Svg w={20} h={26}>
            <path d="M8 1v20M1 8h14M5.500 3.500L8 1l2.500 2.500M3.500 5.500L1 8l2.500 2.500M12.500 5.500L15 8l-2.500 2.500" stroke="#222" strokeWidth="1.500" strokeDasharray="3 1" />
            <path d="M8 8l9 10h-4.500l2.500 6-2 1-2.500-6L8 21z" fill="#fff" stroke="#333" />
          </Svg>
        </Pointer>
        <Watermark>
          <WatermarkTop>RECORDED WITH</WatermarkTop>
          <WatermarkMain>
            <span>SCREENCAST</span>
            <Svg w={32} h={32}>
              <circle cx="16" cy="16" r="13" fill="#ffffff66" stroke="#ddd" strokeWidth="5" />
              <circle cx="16" cy="16" r="13" stroke="#3a76ac" strokeWidth="3" />
              <circle cx="16" cy="16" r="6" fill="#2f78b8" stroke="#e8e8e8" strokeWidth="2" />
            </Svg>
            <span>MATIC</span>
          </WatermarkMain>
        </Watermark>
      </Window>
    </Screen>
  );
}

const HSpacer = styled.span`
  width: 14px;
`;
